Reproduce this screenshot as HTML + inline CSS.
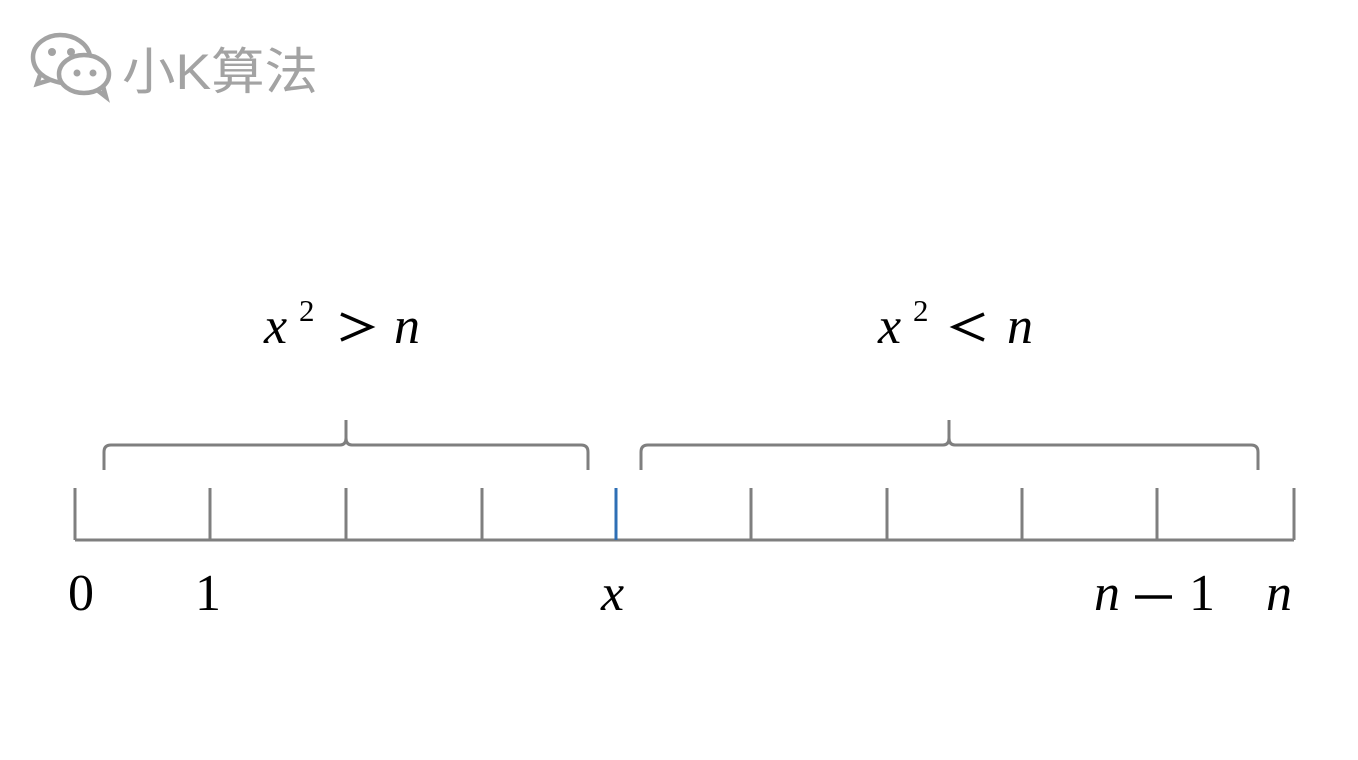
<!DOCTYPE html>
<html><head><meta charset="utf-8"><style>
html,body{margin:0;padding:0;background:#fff;width:1358px;height:760px;overflow:hidden}
</style></head><body>
<svg width="1358" height="760" viewBox="0 0 1358 760" xmlns="http://www.w3.org/2000/svg">
<g fill="none" stroke="#a3a3a3" stroke-width="4.5">
<path d="M62 83 C44 80 33 70 33 57 C33 44 47 35 60 35 C75 35 88 44 90 56"/>
<path d="M40 75 L37 84 L50 80"/>
<ellipse cx="84" cy="74" rx="25" ry="19"/>
<path d="M97 90 L106 97 L103 86"/>
</g>
<g fill="#a3a3a3">
<circle cx="52" cy="52" r="4"/><circle cx="71" cy="52" r="4"/>
<circle cx="77" cy="73" r="3.5"/><circle cx="93" cy="73" r="3.5"/>
</g>
<text x="122" y="89" font-family="'Liberation Sans','Noto Sans CJK SC',sans-serif" font-size="50" fill="#a3a3a3" textLength="196" lengthAdjust="spacingAndGlyphs">小K算法</text>
<g stroke="#7f7f7f" stroke-width="3" fill="none">
<line x1="75" y1="540" x2="1294" y2="540"/>
<line x1="75" y1="488" x2="75" y2="540"/>
<line x1="210" y1="488" x2="210" y2="540"/>
<line x1="346" y1="488" x2="346" y2="540"/>
<line x1="482" y1="488" x2="482" y2="540"/>
<line x1="751" y1="488" x2="751" y2="540"/>
<line x1="887" y1="488" x2="887" y2="540"/>
<line x1="1022" y1="488" x2="1022" y2="540"/>
<line x1="1157" y1="488" x2="1157" y2="540"/>
<line x1="1294" y1="488" x2="1294" y2="540"/>
<path d="M104 470 L104 452 Q104 445 111 445 L340 445 Q346 445 346 438 L346 420 M346 438 Q346 445 352 445 L581 445 Q588 445 588 452 L588 470"/>
<path d="M641 470 L641 452 Q641 445 648 445 L943 445 Q949 445 949 438 L949 420 M949 438 Q949 445 955 445 L1251 445 Q1258 445 1258 452 L1258 470"/>
</g>
<line x1="616" y1="488" x2="616" y2="540" stroke="#2e6fb5" stroke-width="3"/>
<g stroke="#000" stroke-width="3.5" fill="none">
<path d="M341 314 L371 327 L341 340"/>
<path d="M984 314 L954 327 L984 340"/>
<line x1="1135" y1="597" x2="1172" y2="597"/>
</g>
<g font-family="'Liberation Serif',serif" font-size="52" fill="#000">
<text x="264" y="343" font-style="italic">x</text>
<text x="299" y="321" font-size="31">2</text>
<text x="394" y="343" font-style="italic">n</text>
<text x="878" y="343" font-style="italic">x</text>
<text x="913" y="321" font-size="31">2</text>
<text x="1007" y="343" font-style="italic">n</text>
<text x="68" y="610">0</text>
<text x="195" y="610">1</text>
<text x="601" y="610" font-style="italic">x</text>
<text x="1094" y="610" font-style="italic">n</text>
<text x="1189" y="610">1</text>
<text x="1266" y="610" font-style="italic">n</text>
</g>
</svg>
</body></html>
